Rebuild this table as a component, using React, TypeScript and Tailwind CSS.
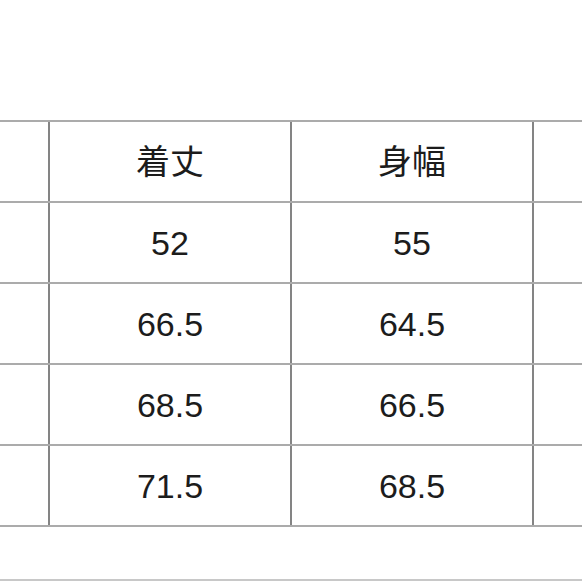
import React from 'react';

const rows: string[][] = [
  ['', '着丈', '身幅', ''],
  ['', '52', '55', ''],
  ['', '66.5', '64.5', ''],
  ['', '68.5', '66.5', ''],
  ['', '71.5', '68.5', ''],
];

export default function App() {
  return (
    <div
      className="w-[582px] h-[582px] overflow-hidden bg-white text-[#1c1c1c] pt-[120px]"
      style={{ fontFamily: '"Liberation Sans", "Noto Sans CJK JP", sans-serif' }}
    >
      <div className="border-t-2 border-[#ababab]">
        {rows.map((row, i) => (
          <div key={i} className="grid grid-cols-[50px_242px_242px_1fr] h-[81px] border-b-2 border-[#ababab]">
            {row.map((cell, j) => (
              <div
                key={j}
                className={
                  'flex items-center justify-center text-[34px] leading-none ' +
                  (j < 3 ? 'border-r-2 border-[#848484]' : '')
                }
              >
                {cell}
              </div>
            ))}
          </div>
        ))}
      </div>
      <div className="mt-[52px] h-[2px] bg-[#c8c8c8]" />
    </div>
  );
}
